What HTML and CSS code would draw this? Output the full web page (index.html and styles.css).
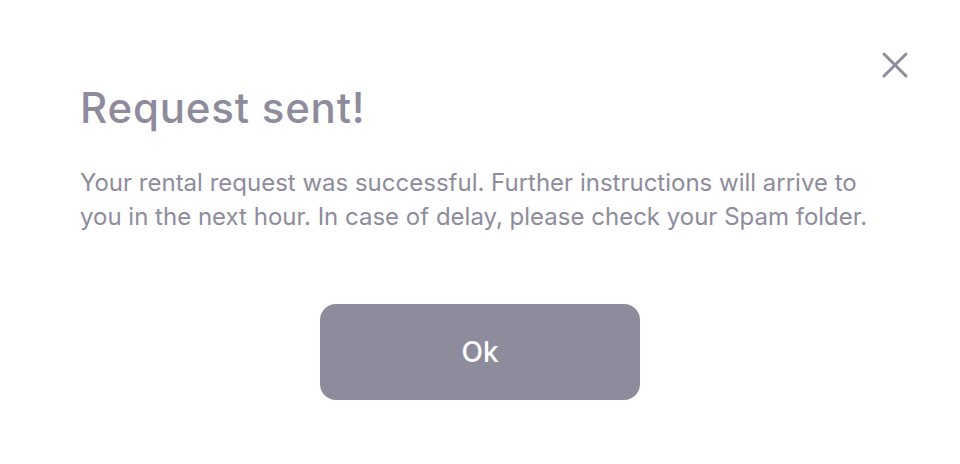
FILE: index.html
```html
<!DOCTYPE html>
<html>
<head>
<meta charset="utf-8">
<link rel="stylesheet" href="styles.css">
</head>
<body>
<div class="modal">
  <button class="close" aria-label="Close">
    <svg width="28" height="28" viewBox="0 0 28 28"><path d="M3 3 L25 25 M25 3 L3 25" stroke="#8e8c9c" stroke-width="3" stroke-linecap="round"/></svg>
  </button>
  <h1 class="title">Request sent!</h1>
  <p class="text">Your rental request was successful. Further instructions will arrive to you in the next hour. In case of delay, please check your Spam folder.</p>
  <div class="actions">
    <button class="ok">Ok</button>
  </div>
</div>
</body>
</html>
```
FILE: styles.css
```css
html, body {
  margin: 0;
  padding: 0;
  background: #ffffff;
}
.modal {
  position: relative;
  width: 960px;
  height: 464px;
  box-sizing: border-box;
  padding: 80px 80px 0 80px;
  font-family: Inter, "Noto Sans", sans-serif;
  color: #8e8c9c;
}
.close {
  position: absolute;
  top: 51px;
  right: 51px;
  width: 28px;
  height: 28px;
  padding: 0;
  border: 0;
  background: none;
  display: flex;
}
.title {
  margin: 0;
  font-size: 42px;
  line-height: 56px;
  font-weight: 500;
  letter-spacing: 0.8px;
}
.text {
  margin: 30px 0 0 0;
  font-size: 24px;
  line-height: 34px;
  font-weight: 400;
  max-width: 800px;
}
.actions {
  display: flex;
  justify-content: center;
  margin-top: 70px;
}
.ok {
  width: 320px;
  height: 96px;
  border: 0;
  border-radius: 16px;
  background: #8e8c9c;
  color: #ffffff;
  font-family: Inter, "Noto Sans", sans-serif;
  font-size: 28px;
  font-weight: 500;
}
```
